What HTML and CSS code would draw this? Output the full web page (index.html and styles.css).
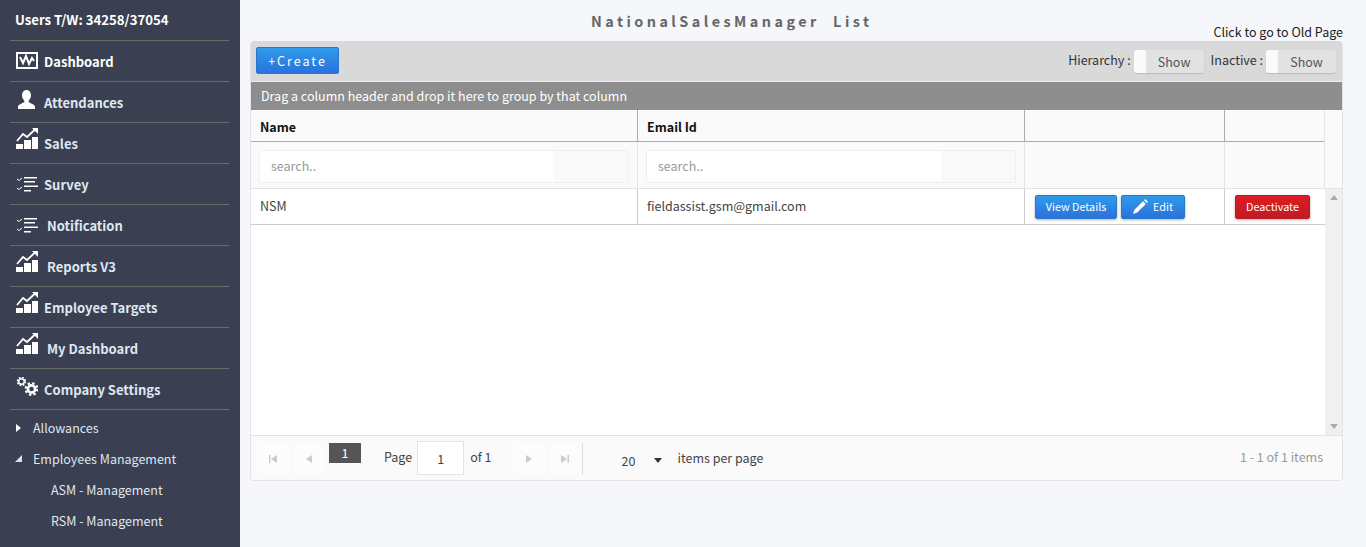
FILE: index.html
```html
<!DOCTYPE html>
<html lang="en">
<head>
<meta charset="utf-8">
<title>NationalSalesManager List</title>
<link rel="stylesheet" href="styles.css">
</head>
<body>
<div class="app">
  <aside class="sidebar">
    <div class="users">Users T/W: 34258/37054</div>
    <nav class="menu">
      <a class="item bright"><svg class="ic ic-dash" viewBox="0 0 22 17"><path fill="#fff" fill-rule="evenodd" d="M0 0h22v17H0zM2 2v13h18V2z"/><path fill="none" stroke="#fff" stroke-width="2" d="M4 5l3 6 3-7 3 8 3-6 2 3"/></svg><span>Dashboard</span></a>
      <a class="item"><svg class="ic ic-user" viewBox="0 0 22 19"><path fill="#fff" d="M10.500 0c3 0 4.500 2.500 4.500 5.500 0 3-2 4.500-2.500 6 0 1.500 6.500 2.500 6.500 5V19H2v-2.500c0-2.500 6.500-3.500 6.500-5C8 10 6 8.500 6 5.500S7.500 0 10.500 0z"/></svg><span>Attendances</span></a>
      <a class="item"><svg class="ic ic-chart" viewBox="0 0 22 21"><use href="#chart"/></svg><span>Sales</span></a>
      <a class="item"><svg class="ic ic-list" viewBox="0 0 22 15"><use href="#list"/></svg><span>Survey</span></a>
      <a class="item wide"><svg class="ic ic-list" viewBox="0 0 22 15"><use href="#list"/></svg><span>Notification</span></a>
      <a class="item wide"><svg class="ic ic-chart" viewBox="0 0 22 21"><use href="#chart"/></svg><span>Reports V3</span></a>
      <a class="item"><svg class="ic ic-chart" viewBox="0 0 22 21"><use href="#chart"/></svg><span>Employee Targets</span></a>
      <a class="item wide"><svg class="ic ic-chart" viewBox="0 0 22 21"><use href="#chart"/></svg><span>My Dashboard</span></a>
      <a class="item"><svg class="ic ic-gear" viewBox="0 0 22 19"><use href="#gears"/></svg><span>Company Settings</span></a>
    </nav>
    <ul class="tree">
      <li><i class="arrow-right"></i>Allowances</li>
      <li><i class="arrow-open"></i>Employees Management</li>
      <li class="sub">ASM - Management</li>
      <li class="sub">RSM - Management</li>
    </ul>
  </aside>

  <main class="main">
    <header class="head">
      <h1 class="title">NationalSalesManager&nbsp; List</h1>
      <a class="old">Click to go to Old Page</a>
    </header>
    <section class="panel">
      <div class="toolbar">
        <button class="btn create">+Create</button>
        <div class="toggles">
          <label class="tlabel">Hierarchy :</label>
          <div class="switch"><b class="knob"></b><span>Show</span></div>
          <label class="tlabel">Inactive :</label>
          <div class="switch"><b class="knob"></b><span>Show</span></div>
        </div>
      </div>
      <div class="group">Drag a column header and drop it here to group by that column</div>
      <div class="headgrid">
        <div class="hc">Name</div>
        <div class="hc">Email Id</div>
        <div class="hc"></div>
        <div class="hc"></div>
        <div class="gap"></div>
        <div class="fc"><div class="search"><div class="sfield">search..</div></div></div>
        <div class="fc"><div class="search"><div class="sfield">search..</div></div></div>
        <div class="fc"></div>
        <div class="fc"></div>
        <div class="gap"></div>
      </div>
      <div class="body">
        <div class="rows">
          <div class="row">
            <div class="dc">NSM</div>
            <div class="dc">fieldassist.gsm@gmail.com</div>
            <div class="dc acts">
              <button class="btn small">View Details</button>
              <button class="btn small"><svg class="pen" viewBox="0 0 16 16"><path fill="#fff" d="M13 0l3 3-1.300 1.300-3-3zM10.700 2.300l3 3L4.500 14.500 0 16l1.500-4.500z"/></svg>Edit</button>
            </div>
            <div class="dc del"><button class="btn small red">Deactivate</button></div>
          </div>
        </div>
        <div class="scroll"><i class="up"></i><i class="down"></i></div>
      </div>
      <footer class="pager">
        <div class="pbtn"><svg viewBox="0 0 8 8"><path d="M0 0h1.500v8H0zM8 0v8L2 4z"/></svg></div>
        <div class="pbtn"><svg viewBox="0 0 8 8"><path d="M7 0v8L1 4z"/></svg></div>
        <div class="cur">1</div>
        <span class="ptext first">Page</span>
        <div class="pinput">1</div>
        <span class="ptext">of 1</span>
        <div class="pbtn nextb"><svg viewBox="0 0 8 8"><path d="M1 0v8l6-4z"/></svg></div>
        <div class="pbtn"><svg viewBox="0 0 8 8"><path d="M8 0h-1.500v8H8zM0 0v8l6-4z"/></svg></div>
        <div class="sep"></div>
        <div class="size"><span>20</span><i class="caret"></i></div>
        <span class="ptext items">items per page</span>
        <span class="info">1 - 1 of 1 items</span>
      </footer>
    </section>
  </main>
</div>
<svg class="defs" width="0" height="0">
  <defs>
    <g id="chart" fill="#fff">
      <path d="M0 16h7v5H0zM8 12h7v9H8zM16 9h6v12h-6z"/>
      <path fill="none" stroke="#fff" stroke-width="1.800" d="M1 13l6-7 4 3 8-7.500"/>
      <path d="M16 0h6v6z"/>
    </g>
    <g id="list" fill="#fff">
      <path d="M8 0h13v1.600H8zM8 4h11v1.600H8zM8 8.500h14v1.600H8zM8 13h7v1.600H8z"/>
      <path fill="none" stroke="#fff" d="M1 2l2 1.500L6 1M1 11l2 1.500L6 10"/>
    </g>
    <g id="gears" fill="none" stroke="#fff">
      <circle cx="5.500" cy="4.500" r="2.800" stroke-width="1.500"/>
      <circle cx="5.500" cy="4.500" r="4" stroke-width="1.600" stroke-dasharray="1.700 1.440"/>
      <circle cx="15.500" cy="12" r="3.600" stroke-width="2.600"/>
      <circle cx="15.500" cy="12" r="5.800" stroke-width="2.200" stroke-dasharray="2.400 2.150"/>
    </g>
  </defs>
</svg>
</body>
</html>
```
FILE: styles.css
```css
* { box-sizing: border-box; }
html, body { margin: 0; height: 100%; }
body {
  font-family: "Noto Sans CJK SC", "Source Sans Pro", "Open Sans", sans-serif;
  font-size: 12.5px;
  color: #333;
  background: #f5f7fb;
  overflow: hidden;
}
.app { display: flex; height: 547px; overflow: hidden; }

/* sidebar */
.sidebar { width: 240px; flex: none; background: #3a3f51; color: #dfe7f0; padding: 0 10px; overflow: hidden; }
.users { height: 41px; line-height: 40px; padding-left: 5px; color: #fff; font-weight: 700; font-size: 13.2px; border-bottom: 1px solid #696969; width: 219px; }
.menu { width: 219px; }
.item { display: flex; align-items: flex-start; height: 41px; padding-left: 6px; border-bottom: 1px solid #696969; font-weight: 700; font-size: 13px; line-height: 20px; }
.item.bright { color: #fff; }
.item span { margin: 11px 0 0 6px; }
.item.wide span { margin-left: 9px; }
.ic { width: 22px; flex: none; }
.ic-dash { height: 17px; margin-top: 11px; }
.ic-user { height: 19px; margin-top: 8px; }
.ic-chart { height: 21px; margin-top: 5px; }
.ic-list { height: 15px; margin-top: 13px; }
.ic-gear { height: 19px; margin-top: 8px; }
.tree { list-style: none; margin: 2px 0 0; padding: 0; }
.tree li { height: 31px; line-height: 31px; padding-left: 23px; position: relative; }
.tree li.sub { padding-left: 41px; }
.arrow-right { position: absolute; left: 6px; top: 12px; border-left: 5px solid #fff; border-top: 4px solid transparent; border-bottom: 4px solid transparent; }
.arrow-open { position: absolute; left: 5px; top: 12px; border-right: 7px solid #e0e0e0; border-top: 7px solid transparent; }

/* main */
.main { flex: 1; padding: 0 23px 0 10px; min-width: 0; }
.head { height: 41px; display: flex; justify-content: space-between; }
.title { margin: 11px 0 0 341px; font-size: 14.4px; line-height: 20px; font-weight: 700; letter-spacing: 3.45px; color: #666; white-space: nowrap; }
.old { margin-top: 23px; font-size: 12.5px; line-height: 18px; color: #222; white-space: nowrap; }

.panel { height: 440px; border: 1px solid #e3e3e3; border-top: 0; border-radius: 4px; background: #fff; display: flex; flex-direction: column; overflow: hidden; }
.toolbar { height: 41px; flex: none; background: #d9d9d9; display: flex; align-items: flex-start; justify-content: space-between; padding: 6px 6px 0 5px; border-bottom: 1px solid #eee; }
.btn { border: 1px solid #2a76c9; border-radius: 2px; color: #fff; font-family: inherit; background: linear-gradient(#2f9bea, #2a71dd); cursor: pointer; padding: 0; }
.create { width: 83px; height: 27px; font-size: 12.5px; letter-spacing: 2px; line-height: 24px; }
.toggles { display: flex; align-items: flex-start; padding-top: 3px; }
.tlabel { line-height: 18px; margin-top: 1px; color: #333; margin-right: 3px; }
.switch { width: 70px; height: 23px; background: #e2e2e2; border-radius: 3px; box-shadow: 0 1px 1px #bbb; display: flex; align-items: center; margin-right: 7px; color: #555; }
.switch:last-child { margin-right: 0; }
.knob { width: 12px; height: 23px; background: #fafafa; border-radius: 3px 0 0 3px; flex: none; }
.switch span { flex: 1; text-align: center; padding-right: 1px; }

.group { height: 28px; flex: none; background: #8e8e8e; color: #fff; line-height: 28px; padding-left: 10px; }

.headgrid { display: grid; grid-template-columns: 387px 387px 200px 100px 1fr; grid-template-rows: 32px 47px; background: #fafafa; flex: none; }
.hc { border-right: 1px solid #adadad; border-bottom: 1px solid #adadad; padding-left: 9px; font-weight: 700; color: #111; line-height: 34px; }
.hc:nth-child(4) { border-right: 1px solid #e6e6e6; }
.fc { border-right: 1px solid #e6e6e6; border-bottom: 1px solid #e2e2e2; padding: 8px 8px 0; }
.gap:last-child { border-bottom: 1px solid #e2e2e2; }
.search { height: 33px; border: 1px solid #efefef; background: #f9f9f9; border-radius: 2px; }
.sfield { width: 294px; height: 31px; background: #fff; padding-left: 11px; line-height: 29px; color: #999; }

.body { flex: 1; display: flex; min-height: 0; border-bottom: 1px solid #e2e2e2; }
.rows { width: 1074px; flex: none; }
.row { display: grid; grid-template-columns: 387px 387px 200px 100px; grid-template-rows: 35px; height: 36px; border-bottom: 1px solid #ccc; }
.dc { border-right: 1px solid #ccc; padding-left: 9px; line-height: 33px; color: #444; }
.dc:last-child { border-right: 0; }
.acts { padding-left: 10px; display: flex; align-items: flex-start; gap: 4px; padding-top: 6px; }
.del { display: flex; align-items: flex-start; padding: 6px 0 0 10px; }
.small { height: 24px; font-size: 10.8px; line-height: 21px; padding-bottom: 2px; box-shadow: 0 1px 3px rgba(0,0,0,.3); display: inline-flex; align-items: center; justify-content: center; }
.acts .small:first-child { width: 82px; }
.acts .small:last-child { width: 64px; }
.pen { width: 15px; height: 15px; margin-right: 5px; }
.red { width: 75px; background: linear-gradient(#dc1c24, #c21a22); border-color: #bb1a22; }
.scroll { flex: 1; background: #f0f0f0; position: relative; }
.up { position: absolute; left: 5px; top: 6px; border: 4px solid transparent; border-top: 0; border-bottom: 5px solid #aaa; }
.down { position: absolute; left: 5px; bottom: 6px; border: 4px solid transparent; border-bottom: 0; border-top: 5px solid #aaa; }

.pager { height: 44px; flex: none; background: #fafafa; display: flex; align-items: flex-start; padding: 7px 0 0 6px; color: #444; }
.pbtn { width: 32px; height: 32px; margin-right: 4px; background: #fcfcfc; display: flex; align-items: center; justify-content: center; }
.pbtn svg { width: 8px; height: 8px; fill: #ccc; }
.cur { width: 32px; height: 20px; background: #555; color: #fff; text-align: center; line-height: 19px; }
.ptext { line-height: 18px; margin-top: 5px; }
.first { margin-left: 23px; }
.pinput { width: 47px; height: 34px; margin: -2px 6px 0 5px; border: 1px solid #e4e4e4; background: #fff; line-height: 34px; text-align: center; }
.nextb { margin-left: 21px; }
.sep { width: 1px; height: 32px; background: #ddd; margin-left: -3px; }
.size { width: 48px; margin-left: 39px; display: flex; align-items: center; height: 32px; padding-top: 3px; }
.caret { margin-left: 19px; border: 4px solid transparent; border-top: 5px solid #333; border-bottom: 0; }
.items { margin-left: 8px; margin-top: 6px; }
.info { margin-left: auto; margin-right: 19px; margin-top: 5px; line-height: 18px; color: #999; }
.defs { position: absolute; }
```
